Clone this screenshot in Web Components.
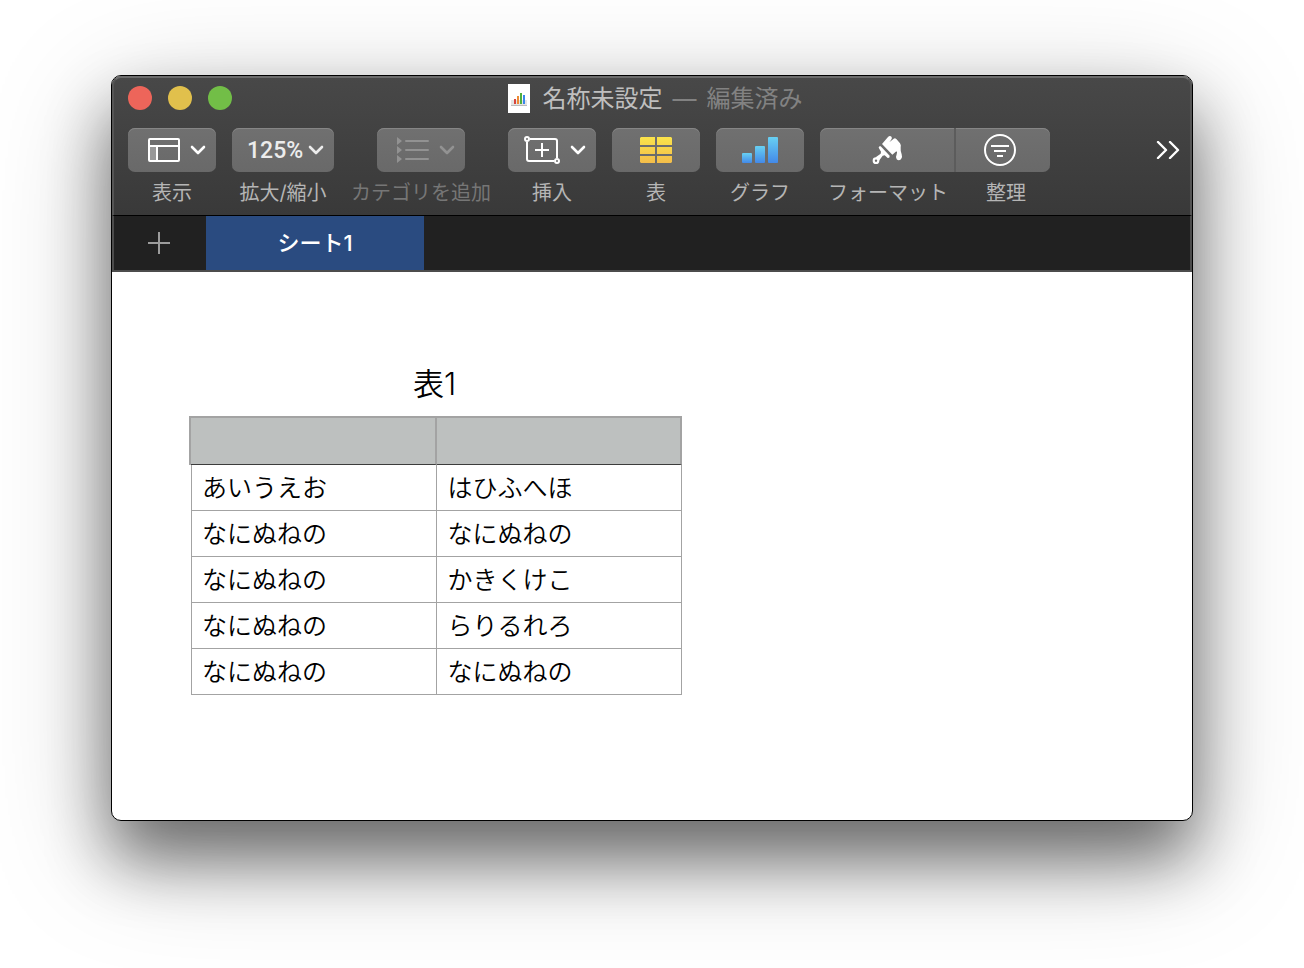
<!DOCTYPE html>
<html lang="ja">
<head>
<meta charset="utf-8">
<meta name="viewport" content="width=device-width, initial-scale=1">
<title>名称未設定</title>
<style>
  body {
    margin: 0;
    box-sizing: border-box;
    min-height: 100vh;
    display: grid;
    padding: 75px 111px 147px;
    background: #fff;
    font-family: Inter, "Noto Sans CJK JP", sans-serif;
  }
</style>
</head>
<body>
<app-window>
  <title-bar slot="chrome" name="名称未設定" state="編集済み"></title-bar>
  <tool-bar slot="chrome">
    <tool-item caption="表示" menu>
      <svg width="32" height="24" viewBox="0 0 32 24" fill="none"><path d="M1 8h8v15H1z" fill="#989898"/><path d="M1 8h30M9 8v15" stroke="#fff" stroke-width="2"/><rect x="1" y="1" width="30" height="22" rx="1" stroke="#fff" stroke-width="2"/></svg>
    </tool-item>
    <zoom-item caption="拡大/縮小"></zoom-item>
    <tool-item class="wide" caption="カテゴリを追加" menu disabled>
      <svg width="32" height="26" viewBox="0 0 32 26" fill="#929292"><path d="M0 0l5 4-5 4zM0 9l5 4-5 4zM0 18l5 4-5 4z"/><path d="M9 4h22M9 13h22M9 22h22" stroke="#929292" stroke-width="2" stroke-linecap="round"/></svg>
    </tool-item>
    <tool-item caption="挿入" menu>
      <svg width="36" height="28" viewBox="0 0 36 28" fill="none" stroke="#fff" stroke-width="2"><path d="M6 3h25a2 2 0 0 1 2 2v17M30 25H5a2 2 0 0 1-2-2V6M18 7v14M11 14h14"/><circle cx="3" cy="3" r="2"/><circle cx="33" cy="25" r="2"/></svg>
    </tool-item>
    <tool-item caption="表">
      <svg width="32" height="26" viewBox="0 0 32 26"><defs><linearGradient id="y" x1="0" y1="0" x2="0" y2="26" gradientUnits="userSpaceOnUse"><stop stop-color="#fbe44b"/><stop offset="1" stop-color="#f3bd4a"/></linearGradient></defs><path fill="url(#y)" d="M1 0h14v8H0V1zM17 0h14l1 1v7H17zM0 10h15v7H0zM17 10h15v7H17zM0 19h15v7H1l-1-1zM17 19h15v6l-1 1H17z"/></svg>
    </tool-item>
    <tool-item caption="グラフ">
      <svg width="36" height="26" viewBox="0 0 36 26"><defs><linearGradient id="b" x1="0" y1="0" x2="0" y2="1"><stop stop-color="#68d0f2"/><stop offset="1" stop-color="#4389e8"/></linearGradient></defs><rect y="16" width="10" height="10" rx="1" fill="url(#b)"/><rect x="13" y="9" width="10" height="17" rx="1" fill="url(#b)"/><rect x="26" width="10" height="26" rx="1" fill="url(#b)"/></svg>
    </tool-item>
    <inspector-switch></inspector-switch>
  </tool-bar>
  <sheet-tabs slot="chrome">シート1</sheet-tabs>
  <sheet-canvas>
    <data-table name="表1"></data-table>
  </sheet-canvas>
</app-window>

<script>
const RESET = `
  *, *::before, *::after { box-sizing: border-box; }
  button, select { margin: 0; padding: 0; border: 0; font: inherit; color: inherit; background: none; appearance: none; }
  svg { display: block; flex: none; }
`;
const FACE = `
  .face {
    height: 44px;
    border-radius: 7px;
    background: linear-gradient(#707070, #696969);
    box-shadow: inset 0 1px #868686;
  }
  .caption { font-size: 20px; line-height: 24px; color: #b5b5b5; white-space: nowrap; }
`;
const CHEVRON = (color) => `<svg width="16" height="10" viewBox="0 0 16 10" fill="none" stroke="${color}" stroke-width="2.6" stroke-linecap="round" stroke-linejoin="round"><path d="M2 2l6 6 6-6"/></svg>`;

class Base extends HTMLElement {
  constructor() {
    super();
    this.attachShadow({ mode: "open" });
  }
  connectedCallback() {
    this.shadowRoot.innerHTML = `<style>${RESET}${this.styles()}</style>${this.markup()}`;
  }
}

customElements.define("app-window", class extends Base {
  styles() { return `
    :host {
      display: flex; flex-direction: column; box-sizing: border-box; min-width: 0;
      border: 1px solid #000; border-radius: 10px; overflow: hidden; background: #fff;
      box-shadow: 0 38px 64px rgba(0, 0, 0, .48), 0 30px 120px rgba(0, 0, 0, .26);
    }
    .chrome {
      display: flex; flex-direction: column;
      background: linear-gradient(#484848, #393939 139px);
    }
    main { flex: 1; display: grid; }
  `; }
  markup() { return `<header class="chrome"><slot name="chrome"></slot></header><main><slot></slot></main>`; }
});

customElements.define("title-bar", class extends Base {
  styles() { return `
    :host {
      display: grid; grid-template-columns: 1fr auto 1fr; align-items: center; height: 42px;
      padding: 0 14px; box-sizing: border-box;
      border: 2px solid #555; border-top-color: #6c6c6c; border-bottom: 0; border-radius: 9px 9px 0 0;
    }
    .lights { display: flex; gap: 16px; }
    .lights button { width: 24px; height: 24px; border-radius: 50%; }
    .close { background: #ed655a; }
    .min { background: #e1c04c; }
    .max { background: #72be47; }
    .title { display: flex; align-items: center; gap: 13px; padding-left: 6px; }
    h1 { margin: 0; padding-top: 2px; display: flex; gap: 10px; font-size: 24px; line-height: 32px; font-weight: 400; color: #bfbfbf; white-space: nowrap; }
    .state { display: flex; gap: 10px; color: #828282; }
  `; }
  markup() { return `
    <div class="lights">
      <button class="close" aria-label="閉じる"></button>
      <button class="min" aria-label="しまう"></button>
      <button class="max" aria-label="フルスクリーン"></button>
    </div>
    <div class="title">
      <svg width="22" height="29" viewBox="0 0 22 29"><path fill="#fff" d="M0 0h22v29H0z"/><path fill="#e4e4e4" d="M3 16h16v5H3z"/><path fill="#bbb" d="M3 21h16v1H3z"/><path fill="#d8453c" d="M6 15h2v5H6z"/><path fill="#ee8a35" d="M9 12h2v8H9z"/><path fill="#4fae3d" d="M12 9h2v11h-2z"/><path fill="#3a86ea" d="M15 11h2v9h-2z"/></svg>
      <h1><span>${this.getAttribute("name")}</span><span class="state"><span>—</span><span>${this.getAttribute("state")}</span></span></h1>
    </div>`; }
});

customElements.define("tool-bar", class extends Base {
  styles() { return `
    :host {
      display: flex; align-items: flex-start; gap: 16px; padding: 10px 10px 10px 14px;
      border: solid #555; border-width: 0 2px; 
    }
    .more { margin-left: auto; height: 44px; display: flex; align-items: center; }
  `; }
  markup() { return `
    <slot></slot>
    <button class="more" aria-label="その他"><svg width="24" height="18" viewBox="0 0 24 18" fill="none" stroke="#fff" stroke-width="2.4" stroke-linecap="round" stroke-linejoin="round"><path d="M2 1l8 8-8 8M14 1l8 8-8 8"/></svg></button>`; }
});

customElements.define("tool-item", class extends Base {
  styles() { return `${FACE}
    :host { display: flex; flex-direction: column; align-items: center; gap: 9px; }
    :host(.wide) { min-width: 142px; }
    .face { width: 88px; display: flex; align-items: center; justify-content: center; gap: 10px; }
    :host([menu]) .face { justify-content: flex-end; padding-right: 10px; }
    :host([disabled]) .caption { color: #767676; }
  `; }
  markup() {
    const off = this.hasAttribute("disabled");
    return `
    <button id="b" class="face" ${off ? "disabled" : ""}><slot></slot>${this.hasAttribute("menu") ? CHEVRON(off ? "#929292" : "#fff") : ""}</button>
    <label for="b" class="caption">${this.getAttribute("caption")}</label>`;
  }
});

customElements.define("zoom-item", class extends Base {
  styles() { return `${FACE}
    :host { display: flex; flex-direction: column; align-items: center; gap: 9px; }
    .face { width: 102px; display: grid; align-items: center; }
    select, svg { grid-area: 1 / 1; }
    select { width: 100%; height: 44px; padding-left: 15px; font-size: 23px; font-weight: 500; font-family: Roboto, sans-serif; color: #ececec; }
    svg { justify-self: end; margin-right: 10px; pointer-events: none; }
  `; }
  markup() { return `
    <div class="face"><select id="z"><option>125%</option></select>${CHEVRON("#ececec")}</div>
    <label for="z" class="caption">${this.getAttribute("caption")}</label>`; }
});

customElements.define("inspector-switch", class extends Base {
  styles() { return `${FACE}
    :host { display: flex; flex-direction: column; gap: 9px; width: 230px; }
    .face { display: flex; }
    button { display: flex; align-items: center; justify-content: center; height: 44px; }
    .format { flex: 0 0 136px; border-right: 2px solid #5c5c5c; }
    .arrange { flex: 1; padding-right: 6px; }
    .captions { display: flex; justify-content: space-between; padding: 0 24px 0 8px; }
  `; }
  markup() { return `
    <div class="face">
      <button id="f" class="format"><svg width="31" height="30" viewBox="186 202 93 90"><path fill="#fff" d="M216 229L234 208Q240 202 245 208Q247 212 243 217L238 224L251 213Q255 210 259 214L270 227Q274 232 272 240Q271 252 275 260Q278 268 273 275Q266 281 260 275Q256 269 260 260Q263 253 259 251L247 261Z"/><path fill="#fff" d="M206 240Q206 234 212 236L239 264Q240 272 233 271L224 263L218 264L207 279Q201 273 197 269L212 258L213 252Z"/><circle cx="198" cy="279" r="10" fill="#fff"/><circle cx="198" cy="279" r="3.5" fill="#6b6b6b"/></svg></button>
      <button id="a" class="arrange"><svg width="32" height="32" viewBox="0 0 32 32" fill="none" stroke="#fff" stroke-width="2"><circle cx="16" cy="16" r="15"/><path d="M7 12h18M10 17h12M13 22h6"/></svg></button>
    </div>
    <div class="captions"><label for="f" class="caption">フォーマット</label><label for="a" class="caption">整理</label></div>`; }
});

customElements.define("sheet-tabs", class extends Base {
  styles() { return `
    :host {
      display: flex; height: 57px; box-sizing: border-box; background: #212121;
      border: 2px solid #4c4c4c; border-top: 1px solid #000;
    }
    .add { width: 92px; padding-right: 2px; display: grid; place-items: center; }
    .tab { width: 218px; background: #2a4b80; color: #fff; font-size: 22px; line-height: 52px; font-weight: 500; }
  `; }
  markup() { return `
    <button class="add" aria-label="シートを追加"><svg width="22" height="22" viewBox="0 0 22 22"><path d="M11 0v22M0 11h22" stroke="#9c9c9c" stroke-width="2"/></svg></button>
    <button class="tab" role="tab" aria-selected="true"><slot></slot></button>`; }
});

customElements.define("sheet-canvas", class extends Base {
  styles() { return `:host { display: block; padding: 92px 79px 48px; }`; }
  markup() { return `<slot></slot>`; }
});

customElements.define("data-table", class extends Base {
  styles() { return `
    :host { display: block; color: #000; }
    table { width: 491px; table-layout: fixed; border-collapse: separate; border-spacing: 0; }
    caption { font-size: 31px; line-height: 40px; padding: 0 4px 12px 0; font-weight: 350; }
    th { height: 49px; background: #bdc0bf; border: 2px solid #a3a3a3; border-left: 0; border-bottom: 1px solid #3c3c3c; padding: 0; }
    th:first-child { box-shadow: -2px 0 #a3a3a3; }
    td { height: 46px; padding: 0 0 0 11px; border: 1px solid #a3a3a3; border-left: 0; border-top: 0; font-size: 25px; line-height: 36px; font-weight: 350; }
    td:first-child { padding-left: 10px; border-left: 1px solid #a3a3a3; }
  `; }
  markup() {
    const rows = [["あいうえお", "はひふへほ"], ["なにぬねの", "なにぬねの"], ["なにぬねの", "かきくけこ"], ["なにぬねの", "らりるれろ"], ["なにぬねの", "なにぬねの"]];
    return `<table><caption>${this.getAttribute("name")}</caption>
      <thead><tr><th scope="col"></th><th scope="col"></th></tr></thead>
      <tbody>${rows.map(r => `<tr>${r.map(c => `<td>${c}</td>`).join("")}</tr>`).join("")}</tbody></table>`;
  }
});
</script>
</body>
</html>
